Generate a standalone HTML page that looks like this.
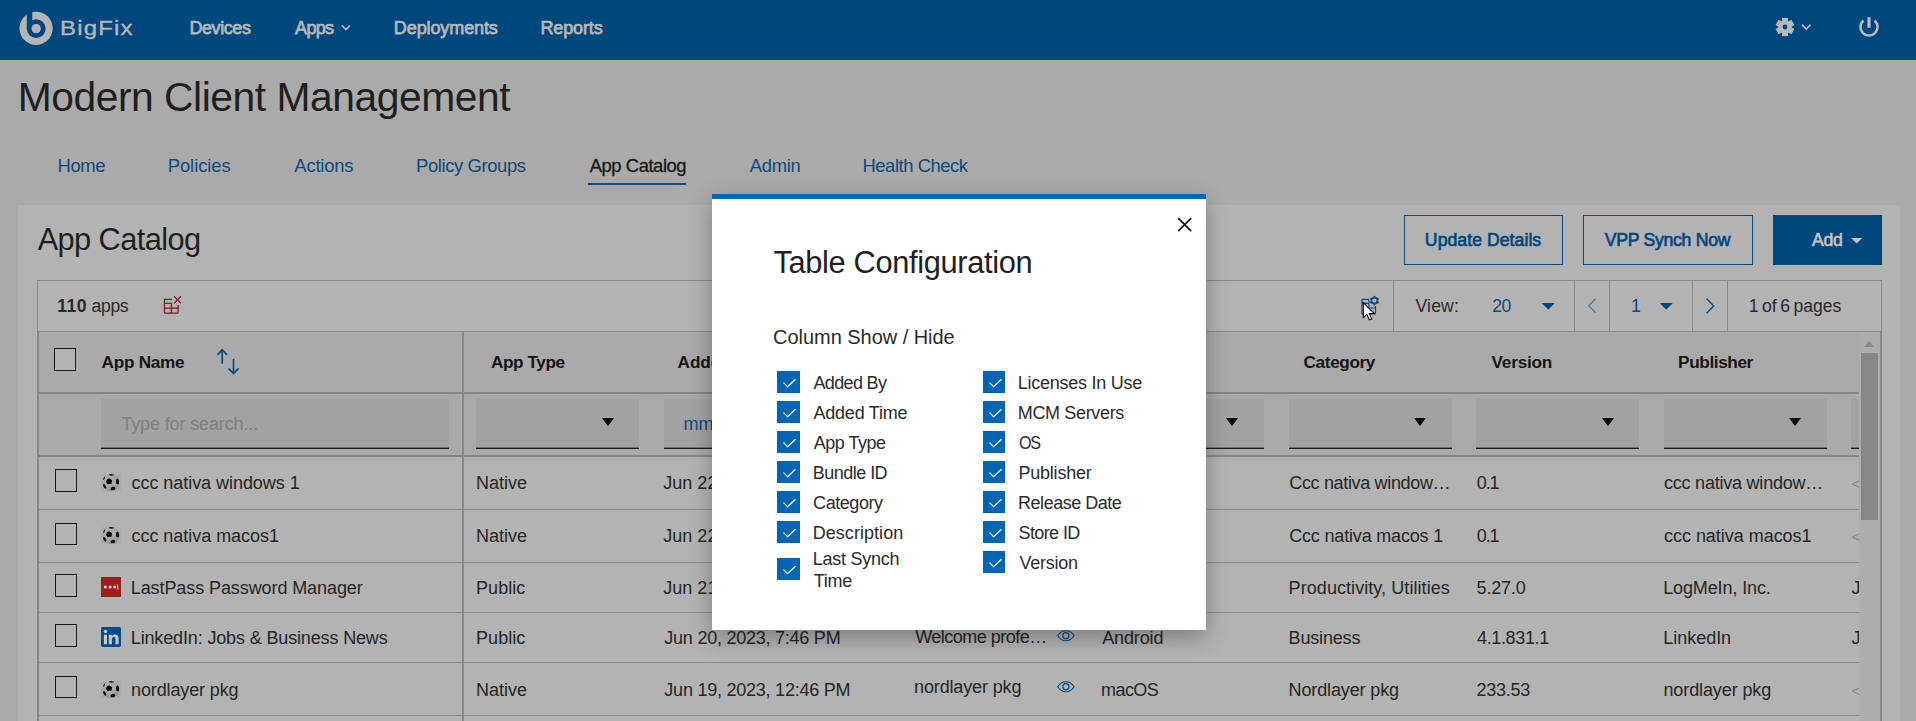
<!DOCTYPE html>
<html lang="en">
<head>
<meta charset="utf-8">
<title>Modern Client Management - App Catalog</title>
<style>
*{box-sizing:border-box;margin:0;padding:0}
html,body{width:1916px;height:721px;overflow:hidden}
body{background:#aaaaaa;font-family:"Liberation Sans",sans-serif;color:#1e1e1e;position:relative}
.t{position:absolute;white-space:nowrap;line-height:1}
.abs{position:absolute}
/* header */
#hdr{position:absolute;left:0;top:0;width:1916px;height:60px;background:#00477d}
.nav{font-size:18px;font-weight:normal;-webkit-text-stroke:.75px #b7b7b7;color:#b7b7b7;top:18.50px;letter-spacing:-.35px}
/* title */
#title{top:76.52px;font-size:40.8px;color:#1f1f1f}
.tab{font-size:18.4px;color:#0d4a7c;top:157.16px;letter-spacing:-.25px}
.tab.on{color:#181818}
/* panel */
#panel{position:absolute;left:18px;top:205px;width:1882px;height:516px;background:#b3b3b3}
#h2{top:225.12px;font-size:30.8px;color:#1f1f1f}
.btn{position:absolute;top:215px;height:50px;border:1px solid #0a4b80;color:#00477d;font-size:17.6px;font-weight:normal;-webkit-text-stroke:.65px}
.btn span{top:16.14px;letter-spacing:-.1px}

/* toolbar */
#tb{position:absolute;left:37px;top:280px;width:1845px;height:52px;border:1px solid #898989;background:#b3b3b3}
.vd{position:absolute;top:281px;width:1px;height:50px;background:#898989}
.tbt{font-size:17.6px;top:297.54px;color:#2a2a2a;letter-spacing:-.1px}
.blue{color:#0a4b80}
/* table */
#tbl{position:absolute;left:37px;top:331px;width:1845px;height:390px;border-left:2px solid #868686;border-right:2px solid #878787;border-top:1px solid #898989;background:#b3b3b3;overflow:hidden}
#thead{position:absolute;left:39px;top:332px;width:1820px;height:62px;background:#aaaaaa;border-bottom:2px solid #868686}
#tfilt{position:absolute;left:39px;top:394px;width:1820px;height:63px;background:#aaaaaa;border-bottom:2px solid #868686}
.th{font-size:17.2px;font-weight:bold;top:353.58px;color:#161616;letter-spacing:-.2px}
.cb{position:absolute;width:22.200px;height:22.600px;border:1px solid #161616;background:#b3b3b3}
.fi{position:absolute;top:399px;height:50px;background:#a2a2a2;border-bottom:1px solid #1c1c1c;box-shadow:0 -1px 0 rgba(28,28,28,.35) inset}
.car{position:absolute;top:418px;width:0;height:0;border-left:6px solid transparent;border-right:6px solid transparent;border-top:8px solid #0c0c0c}
.rl{position:absolute;left:39px;width:1820px;height:1px;background:#8a8a8a}
.td{font-size:18px;color:#262626;letter-spacing:-.05px}
#colsep{position:absolute;left:462px;top:332px;width:2px;height:389px;background:#878787}
/* scrollbar */
#sb{position:absolute;left:1859px;top:332px;width:21px;height:389px;background:#adadad}
#sbt{position:absolute;left:1861px;top:353px;width:17px;height:167px;background:#878787}

/* modal */
#modal{position:absolute;left:712px;top:194px;width:494px;height:436px;background:#fff;border-top:5px solid #0066b3;box-shadow:0 8px 22px rgba(0,0,0,.3)}
#mt{top:247.72px;font-size:30.8px;color:#212121}
#ms{top:326.70px;font-size:20px;color:#2b2b2b}
.ck{position:absolute;width:23px;height:22px;background:#0066b3}
.ck svg{position:absolute;left:0;top:0}
.lb{font-size:18px;color:#2b2b2b}
</style>
</head>
<body>
<svg width="0" height="0" style="position:absolute"><defs><radialGradient id="bg" cx=".42" cy=".38" r=".62"><stop offset="0" stop-color="#b1aeac"/><stop offset=".6" stop-color="#aaa7a5"/><stop offset=".9" stop-color="#9b9896"/><stop offset="1" stop-color="#8c8987"/></radialGradient><clipPath id="bc"><circle cx="9.800" cy="8.550" r="8.550"/></clipPath></defs></svg>
<!-- top navigation bar -->
<div id="hdr">
  <svg class="abs" style="left:19px;top:11px" width="34" height="35" viewBox="0 0 34 35">
    <circle cx="17.100" cy="17.300" r="16.600" fill="#b5b5b5"/>
    <rect x="7.750" y="-1" width="5.500" height="19" fill="#00477d"/>
    <circle cx="17.200" cy="17.600" r="9.450" fill="#00477d"/>
    <circle cx="17.150" cy="17.600" r="4.700" fill="#b5b5b5"/>
  </svg>
  <span class="t" id="brand" style="left:59.5px;top:18.30px;font-size:20px;color:#b5b5b5;letter-spacing:1px;transform:scaleX(1.195);transform-origin:0 0;-webkit-text-stroke:.4px #b5b5b5">BigFix</span>
  <span class="t nav" id="n1" style="left:189.38px;letter-spacing:-0.409px">Devices</span>
  <span class="t nav" id="n2" style="left:295.12px;letter-spacing:-0.686px">Apps</span>
  <svg class="abs" style="left:341px;top:23.6px" width="10" height="8" viewBox="0 0 10 8"><path d="M1 1.5 L5 5.5 L9 1.5" fill="none" stroke="#b9b9b9" stroke-width="1.7"/></svg>
  <span class="t nav" id="n3" style="left:393.84px;letter-spacing:-0.103px">Deployments</span>
  <span class="t nav" id="n4" style="left:540.46px;letter-spacing:-0.135px">Reports</span>
  <svg class="abs" style="left:1773px;top:15px" width="24" height="24" viewBox="-12 -12 24 24"><g fill="#b9b9b9"><circle r="6.700"/><rect x="-3.050" y="-9.100" width="6.100" height="5" transform="rotate(0)"/><rect x="-3.050" y="-9.100" width="6.100" height="5" transform="rotate(60)"/><rect x="-3.050" y="-9.100" width="6.100" height="5" transform="rotate(120)"/><rect x="-3.050" y="-9.100" width="6.100" height="5" transform="rotate(180)"/><rect x="-3.050" y="-9.100" width="6.100" height="5" transform="rotate(240)"/><rect x="-3.050" y="-9.100" width="6.100" height="5" transform="rotate(300)"/></g><circle r="2.400" fill="#00477d"/></svg>
  <svg class="abs" style="left:1800px;top:22px" width="13" height="10" viewBox="0 0 13 10"><path d="M2 2.600l4.300 4.500 4.300-4.500" fill="none" stroke="#b9b9b9" stroke-width="1.600"/></svg>
  <svg class="abs" style="left:1857px;top:15px" width="24" height="24" viewBox="-12 -12 24 24" fill="none" stroke="#b9b9b9"><path d="M-5.50 -6.55A8.55 8.55 0 1 0 5.50 -6.55" stroke-width="2.500"/><path d="M0 -9.800V.8" stroke-width="3.200"/></svg>
</div>

<span class="t" id="title" style="left:17.69px;letter-spacing:-0.462px">Modern Client Management</span>

<!-- tabs -->
<span class="t tab" id="t1" style="left:57.51px;letter-spacing:-0.331px">Home</span>
<span class="t tab" id="t2" style="left:167.74px;letter-spacing:-0.061px">Policies</span>
<span class="t tab" id="t3" style="left:294.35px;letter-spacing:-0.188px">Actions</span>
<span class="t tab" id="t4" style="left:416.11px;letter-spacing:-0.382px">Policy Groups</span>
<span class="t tab on" id="t5" style="left:589.73px;letter-spacing:-0.436px;-webkit-text-stroke:.3px #181818">App Catalog</span>
<div class="abs" style="left:588px;top:183px;width:98px;height:2px;background:#004a80"></div>
<span class="t tab" id="t6" style="left:749.83px;letter-spacing:-0.331px">Admin</span>
<span class="t tab" id="t7" style="left:862.50px;letter-spacing:-0.448px">Health Check</span>

<div id="panel"></div>
<span class="t" id="h2" style="left:37.64px;letter-spacing:-0.598px">App Catalog</span>

<div class="btn" style="left:1404px;width:159px"><span class="t" id="b1" style="left:19.86px;letter-spacing:0.070px">Update Details</span></div>
<div class="btn" style="left:1583px;width:170px"><span class="t" id="b2" style="left:20.67px;letter-spacing:-0.241px">VPP Synch Now</span></div>
<div class="btn" style="left:1773px;width:109px;background:#00477d;color:#c4c4c4;border-color:#00477d"><span class="t" id="b3" style="left:37.89px;letter-spacing:-0.162px">Add</span>
  <svg class="abs" style="left:77.300px;top:21.600px" width="12" height="7" viewBox="0 0 12 7"><path d="M0 0h11.400L5.700 5.600z" fill="#c4c4c4"/></svg>
</div>


<!-- toolbar -->
<div id="tb"></div>
<span class="t tbt" id="cnt" style="left:57.36px;letter-spacing:-0.380px"><b style="letter-spacing:.45px">110</b> apps</span>
<svg class="abs" style="left:155px;top:290px" width="35" height="30" viewBox="0 0 35 30" fill="none" stroke="#8e1521" stroke-width="1.250">
  <path d="M17.100 9.400H9.400V22.200q0 .8 .8 .8H22.300q.8 0 .8-.8V15M9.400 13.400H16.900M9.400 18.100H23.100M16.400 13.400V23"/><path d="M19 6.300l7 7.100M26 6.300l-7 7.100" stroke-width="1.250"/></svg>
<svg class="abs" style="left:1350px;top:285px" width="40" height="40" viewBox="0 0 40 40" fill="none" stroke="#0a4b80" stroke-width="1.150">
  <path d="M18.900 14.400H12V28.200q0 .8 .8 .8H24.700q.8 0 .8-.8V21M12 18.300H18.900M18.900 14.400V23M18.900 23H25.500"/><path d="M24.40 10.90 L26.05 12.74 L28.47 13.25 L27.70 15.60 L28.47 17.95 L26.05 18.46 L24.40 20.30 L22.75 18.46 L20.33 17.95 L21.10 15.60 L20.33 13.25 L22.75 12.74z" fill="#0a4b80" stroke-width=".8"/><circle cx="24.400" cy="15.600" r="2.100" fill="#b3b3b3" stroke="none"/>
  <path d="M13.30 17.60 L13.30 32.60 L16.90 29.40 L19.40 34.90 L21.70 33.90 L19.30 28.60 L24.10 28.50z" fill="#fff" stroke="#000" stroke-width="1.050" stroke-linejoin="miter"/></svg>
<div class="vd" style="left:1393px"></div><div class="vd" style="left:1574px"></div><div class="vd" style="left:1609px"></div><div class="vd" style="left:1692px"></div><div class="vd" style="left:1727px"></div>
<span class="t tbt" id="vw" style="left:1415.45px;letter-spacing:0.189px">View:</span>
<span class="t tbt blue" id="v20" style="left:1492.32px;letter-spacing:-0.480px">20</span>
<svg class="abs" style="left:1541.800px;top:302.800px" width="13" height="7" viewBox="0 0 13 7"><path d="M.6 0h11.400q.8 0 .2 .7L6.700 6.300q-.4 .4-.8 0L.4 .7q-.6-.7 .2-.7z" fill="#00477d"/></svg>
<svg class="abs" style="left:1587px;top:297px" width="11" height="18" viewBox="0 0 11 18"><path d="M8.700 1.700L1.700 8.700l7 7" fill="none" stroke="#4d7ca6" stroke-width="1.300"/></svg>
<span class="t tbt blue" id="pg1" style="left:1631px">1</span>
<svg class="abs" style="left:1659.700px;top:302.800px" width="13" height="7" viewBox="0 0 13 7"><path d="M.6 0h11.400q.8 0 .2 .7L6.700 6.300q-.4 .4-.8 0L.4 .7q-.6-.7 .2-.7z" fill="#00477d"/></svg>
<svg class="abs" style="left:1705px;top:296.500px" width="11" height="18" viewBox="0 0 11 18"><path d="M1.500 1.600L8.700 8.900l-7.200 7.300" fill="none" stroke="#0a4b80" stroke-width="1.400"/></svg>
<span class="t tbt" id="pgs" style="left:1748.72px;word-spacing:-1.300px;letter-spacing:-0.040px">1 of 6 pages</span>

<!-- table -->
<div id="tbl"></div>
<div id="thead"></div>
<div id="tfilt"></div>
<div class="cb" style="left:53.900px;top:347.900px;height:23.100px"></div>
<span class="t th" id="h_name" style="left:101.53px;letter-spacing:-0.262px">App Name</span>
<svg class="abs" style="left:214px;top:345.200px" width="28" height="32" viewBox="0 0 28 32" fill="none" stroke="#0a4b80" stroke-width="1.700">
  <path d="M8.200 18.800V4.600M3.500 9.800L8.200 4.700l4.800 5.100"/><path d="M19.500 14V28.200M14.500 23.300l5 5.200 5.100-5.200"/></svg>
<span class="t th" id="h_type" style="left:490.94px;letter-spacing:-0.408px">App Type</span>
<span class="t th" id="h_added" style="left:677.6px;letter-spacing:-.1px">Added Time</span>
<span class="t th" id="h_desc" style="left:928px">Description</span>
<span class="t th" id="h_os" style="left:1116px">OS</span>
<span class="t th" id="h_cat" style="left:1303.59px;letter-spacing:-0.379px">Category</span>
<span class="t th" id="h_ver" style="left:1491.56px;letter-spacing:-0.222px">Version</span>
<span class="t th" id="h_pub" style="left:1678.12px;letter-spacing:-0.396px">Publisher</span>

<div class="fi" style="left:101px;width:348px"></div>
<span class="t" id="ph" style="left:121.39px;top:414.70px;font-size:18px;color:#808080;letter-spacing:-0.131px">Type for search...</span>
<div class="fi" style="left:476px;width:162.500px"></div><div class="car" style="left:601.500px"></div>
<div class="fi" style="left:664px;width:162.500px"></div>
<span class="t blue" id="mm" style="left:683.5px;top:414.70px;font-size:18px">mm/dd/yyyy</span>
<div class="fi" style="left:914px;width:162.500px"></div>
<div class="fi" style="left:1101px;width:162.500px"></div><div class="car" style="left:1226px"></div>
<div class="fi" style="left:1289px;width:162.500px"></div><div class="car" style="left:1414px"></div>
<div class="fi" style="left:1476px;width:162.500px"></div><div class="car" style="left:1601.500px"></div>
<div class="fi" style="left:1664px;width:162.500px"></div><div class="car" style="left:1789px"></div>
<div class="fi" style="left:1851px;width:8px"></div>
<div class="rl" style="top:509px"></div>
<div class="cb" style="left:55px;top:469.1px"></div>
<svg class="abs" style="left:101px;top:473.6px" width="20" height="18" viewBox="0 0 20 18"><rect width="20" height="17.200" fill="#adadad"/><circle cx="9.800" cy="8.550" r="8.550" fill="url(#bg)"/><g fill="#0a0a0a" clip-path="url(#bc)"><path d="M8 4.300l3.100 1.900-.75 3.600-3.500 .55-1.950-2.900z"/><circle cx="8" cy="7.400" r="2.550"/><ellipse cx="16.600" cy="7.400" rx="1.650" ry="2.800"/><ellipse cx="10.600" cy=".6" rx="2.700" ry="1.100"/><ellipse cx="2.950" cy="3.800" rx=".95" ry="1.900" transform="rotate(25 2.950 3.800)"/><ellipse cx="3.550" cy="12.400" rx="1.400" ry="2.500" transform="rotate(-32 3.550 12.400)"/><ellipse cx="11.900" cy="14.500" rx="2.400" ry="1.700" transform="rotate(-15 11.900 14.500)"/></g></svg>
<span class="t td" id="r0c0" style="left:131.49px;top:473.50px;letter-spacing:-0.046px">ccc nativa windows 1</span>
<span class="t td" id="r0c1" style="left:476.06px;top:473.50px;letter-spacing:-0.033px">Native</span>
<span class="t td" id="r0c2" style="left:663.2px;top:473.50px;letter-spacing:.04px">Jun 22, 2023, 8:10 PM</span>
<span class="t td" id="r0c3" style="left:914px;top:472.20px;letter-spacing:.1px">ccc nativa win…</span>
<span class="t td" id="r0c4" style="left:1101px;top:473.50px;letter-spacing:.1px">Windows</span>
<span class="t td" id="r0c5" style="left:1289.23px;top:473.50px;letter-spacing:-0.335px">Ccc nativa window…</span>
<span class="t td" id="r0c6" style="left:1476.75px;top:473.50px;letter-spacing:-1.095px">0.1</span>
<span class="t td" id="r0c7" style="left:1664.02px;top:473.50px;letter-spacing:-0.223px">ccc nativa window…</span>
<span class="t td" id="r0c8" style="left:1851.5px;top:473.50px;color:#8a8a8a;font-size:15px;margin-top:2px">&lt;</span>
<svg class="abs" style="left:1057.100px;top:475.2px" width="18" height="12" viewBox="0 0 18 12" fill="none" stroke="#0a4b80" stroke-width="1.150"><path d="M.7 5.700C3 2.100 6 .7 8.900 .7S14.800 2.100 17.100 5.700C14.800 9.300 11.800 10.700 8.900 10.700S3 9.300 .7 5.700z"/><circle cx="8.900" cy="5.700" r="3.050"/></svg>
<div class="rl" style="top:562px"></div>
<div class="cb" style="left:55px;top:522.5px"></div>
<svg class="abs" style="left:101px;top:527.0px" width="20" height="18" viewBox="0 0 20 18"><rect width="20" height="17.200" fill="#adadad"/><circle cx="9.800" cy="8.550" r="8.550" fill="url(#bg)"/><g fill="#0a0a0a" clip-path="url(#bc)"><path d="M8 4.300l3.100 1.900-.75 3.600-3.500 .55-1.950-2.900z"/><circle cx="8" cy="7.400" r="2.550"/><ellipse cx="16.600" cy="7.400" rx="1.650" ry="2.800"/><ellipse cx="10.600" cy=".6" rx="2.700" ry="1.100"/><ellipse cx="2.950" cy="3.800" rx=".95" ry="1.900" transform="rotate(25 2.950 3.800)"/><ellipse cx="3.550" cy="12.400" rx="1.400" ry="2.500" transform="rotate(-32 3.550 12.400)"/><ellipse cx="11.900" cy="14.500" rx="2.400" ry="1.700" transform="rotate(-15 11.900 14.500)"/></g></svg>
<span class="t td" id="r1c0" style="left:131.49px;top:527.20px;letter-spacing:-0.033px">ccc nativa macos1</span>
<span class="t td" id="r1c1" style="left:476.06px;top:527.20px;letter-spacing:-0.033px">Native</span>
<span class="t td" id="r1c2" style="left:663.2px;top:527.20px;letter-spacing:.04px">Jun 22, 2023, 7:55 PM</span>
<span class="t td" id="r1c3" style="left:914px;top:525.90px;letter-spacing:.1px">ccc nativa mac…</span>
<span class="t td" id="r1c4" style="left:1101px;top:527.20px;letter-spacing:.1px">macOS</span>
<span class="t td" id="r1c5" style="left:1289.23px;top:527.20px;letter-spacing:-0.177px">Ccc nativa macos 1</span>
<span class="t td" id="r1c6" style="left:1476.75px;top:527.20px;letter-spacing:-1.095px">0.1</span>
<span class="t td" id="r1c7" style="left:1664.02px;top:527.20px;letter-spacing:-0.033px">ccc nativa macos1</span>
<span class="t td" id="r1c8" style="left:1851.5px;top:527.20px;color:#8a8a8a;font-size:15px;margin-top:2px">&lt;</span>
<svg class="abs" style="left:1057.100px;top:528.0px" width="18" height="12" viewBox="0 0 18 12" fill="none" stroke="#0a4b80" stroke-width="1.150"><path d="M.7 5.700C3 2.100 6 .7 8.900 .7S14.800 2.100 17.100 5.700C14.800 9.300 11.800 10.700 8.900 10.700S3 9.300 .7 5.700z"/><circle cx="8.900" cy="5.700" r="3.050"/></svg>
<div class="rl" style="top:612px"></div>
<div class="cb" style="left:55px;top:574.0px"></div>
<svg class="abs" style="left:101px;top:577.0px" width="20" height="20" viewBox="0 0 20 20"><rect width="20" height="20" fill="#9b1f1c"/><g fill="#e0cbca"><circle cx="4.400" cy="10" r="1.550"/><circle cx="9.200" cy="10" r="1.550"/><circle cx="13.700" cy="10" r="1.550"/><rect x="16.300" y="7.200" width=".9" height="5.600"/></g></svg>
<span class="t td" id="r2c0" style="left:130.79px;top:578.70px;letter-spacing:-0.091px">LastPass Password Manager</span>
<span class="t td" id="r2c1" style="left:476.06px;top:578.70px;letter-spacing:0.048px">Public</span>
<span class="t td" id="r2c2" style="left:663.2px;top:578.70px;letter-spacing:.04px">Jun 21, 2023, 9:02 PM</span>
<span class="t td" id="r2c3" style="left:914px;top:577.40px;letter-spacing:.1px">LastPass puts …</span>
<span class="t td" id="r2c4" style="left:1101px;top:578.70px;letter-spacing:.1px">iOS</span>
<span class="t td" id="r2c5" style="left:1288.58px;top:578.70px;letter-spacing:0.069px">Productivity, Utilities</span>
<span class="t td" id="r2c6" style="left:1476.58px;top:578.70px;letter-spacing:-0.196px">5.27.0</span>
<span class="t td" id="r2c7" style="left:1663.23px;top:578.70px;letter-spacing:-0.127px">LogMeIn, Inc.</span>
<span class="t td" id="r2c8" style="left:1851.5px;top:578.70px">J</span>
<svg class="abs" style="left:1057.100px;top:580.4px" width="18" height="12" viewBox="0 0 18 12" fill="none" stroke="#0a4b80" stroke-width="1.150"><path d="M.7 5.700C3 2.100 6 .7 8.900 .7S14.800 2.100 17.100 5.700C14.800 9.300 11.800 10.700 8.900 10.700S3 9.300 .7 5.700z"/><circle cx="8.900" cy="5.700" r="3.050"/></svg>
<div class="rl" style="top:662px"></div>
<div class="cb" style="left:55px;top:624.0px"></div>
<svg class="abs" style="left:101px;top:626.9px" width="20" height="20" viewBox="0 0 20 20"><rect width="20" height="20" rx="1.800" fill="#0a4a8b"/><g fill="#c9c6c3"><rect x="2.900" y="7.700" width="3.100" height="9.500"/><circle cx="4.450" cy="4.500" r="1.750"/><path d="M7.800 7.700h3v1.300c.6-1 1.600-1.600 3.100-1.600 2.900 0 3.700 1.700 3.700 4.400v5.400h-3.100v-4.900c0-1.200-.1-2.400-1.600-2.400s-2 1.100-2 2.400v4.900H7.800z"/></g></svg>
<span class="t td" id="r3c0" style="left:130.79px;top:628.50px;letter-spacing:-0.145px">LinkedIn: Jobs &amp; Business News</span>
<span class="t td" id="r3c1" style="left:476.06px;top:628.50px;letter-spacing:0.048px">Public</span>
<span class="t td" id="r3c2" style="left:664.33px;top:628.50px;letter-spacing:-0.241px">Jun 20, 2023, 7:46 PM</span>
<span class="t td" id="r3c3" style="left:915.23px;top:627.70px;letter-spacing:-0.519px">Welcome profe…</span>
<span class="t td" id="r3c4" style="left:1102.19px;top:628.50px;letter-spacing:-0.125px">Android</span>
<span class="t td" id="r3c5" style="left:1288.58px;top:628.50px;letter-spacing:-0.169px">Business</span>
<span class="t td" id="r3c6" style="left:1477.00px;top:628.50px;letter-spacing:-0.353px">4.1.831.1</span>
<span class="t td" id="r3c7" style="left:1663.23px;top:628.50px;letter-spacing:-0.020px">LinkedIn</span>
<span class="t td" id="r3c8" style="left:1851.5px;top:628.50px">J</span>
<svg class="abs" style="left:1057.100px;top:630.2px" width="18" height="12" viewBox="0 0 18 12" fill="none" stroke="#0a4b80" stroke-width="1.150"><path d="M.7 5.700C3 2.100 6 .7 8.900 .7S14.800 2.100 17.100 5.700C14.800 9.300 11.800 10.700 8.900 10.700S3 9.300 .7 5.700z"/><circle cx="8.900" cy="5.700" r="3.050"/></svg>
<div class="rl" style="top:715px"></div>
<div class="cb" style="left:55px;top:675.6px"></div>
<svg class="abs" style="left:101px;top:680.6px" width="20" height="18" viewBox="0 0 20 18"><rect width="20" height="17.200" fill="#adadad"/><circle cx="9.800" cy="8.550" r="8.550" fill="url(#bg)"/><g fill="#0a0a0a" clip-path="url(#bc)"><path d="M8 4.300l3.100 1.900-.75 3.600-3.500 .55-1.950-2.900z"/><circle cx="8" cy="7.400" r="2.550"/><ellipse cx="16.600" cy="7.400" rx="1.650" ry="2.800"/><ellipse cx="10.600" cy=".6" rx="2.700" ry="1.100"/><ellipse cx="2.950" cy="3.800" rx=".95" ry="1.900" transform="rotate(25 2.950 3.800)"/><ellipse cx="3.550" cy="12.400" rx="1.400" ry="2.500" transform="rotate(-32 3.550 12.400)"/><ellipse cx="11.900" cy="14.500" rx="2.400" ry="1.700" transform="rotate(-15 11.900 14.500)"/></g></svg>
<span class="t td" id="r4c0" style="left:131.06px;top:680.50px;letter-spacing:-0.129px">nordlayer pkg</span>
<span class="t td" id="r4c1" style="left:476.06px;top:680.50px;letter-spacing:-0.033px">Native</span>
<span class="t td" id="r4c2" style="left:664.37px;top:680.50px;letter-spacing:-0.238px">Jun 19, 2023, 12:46 PM</span>
<span class="t td" id="r4c3" style="left:914.06px;top:678.20px;letter-spacing:-0.143px">nordlayer pkg</span>
<span class="t td" id="r4c4" style="left:1101.06px;top:680.50px;letter-spacing:-0.580px">macOS</span>
<span class="t td" id="r4c5" style="left:1288.58px;top:680.50px;letter-spacing:-0.128px">Nordlayer pkg</span>
<span class="t td" id="r4c6" style="left:1476.58px;top:680.50px;letter-spacing:-0.254px">233.53</span>
<span class="t td" id="r4c7" style="left:1663.48px;top:680.50px;letter-spacing:-0.109px">nordlayer pkg</span>
<span class="t td" id="r4c8" style="left:1851.5px;top:680.50px;color:#8a8a8a;font-size:15px;margin-top:2px">&lt;</span>
<svg class="abs" style="left:1057.100px;top:680.8px" width="18" height="12" viewBox="0 0 18 12" fill="none" stroke="#0a4b80" stroke-width="1.150"><path d="M.7 5.700C3 2.100 6 .7 8.900 .7S14.800 2.100 17.100 5.700C14.800 9.300 11.800 10.700 8.900 10.700S3 9.300 .7 5.700z"/><circle cx="8.900" cy="5.700" r="3.050"/></svg>
<div id="colsep"></div>
<div id="sb"></div><div id="sbt"></div>
<svg class="abs" style="left:1864px;top:341px" width="10" height="6" viewBox="0 0 10 6"><path d="M0 6h10L5 0z" fill="#8a8a8a"/></svg>

<!-- modal: table configuration -->
<div id="mwrap">
<div id="modal"></div>
<svg class="abs" style="left:1176px;top:216px" width="18" height="18" viewBox="0 0 18 18"><path d="M2.700 2.600l12 12M14.700 2.600l-12 12" fill="none" stroke="#1a1a1a" stroke-width="1.750" stroke-linecap="round"/></svg>
<span class="t" id="mt" style="left:773.40px;letter-spacing:-0.337px">Table Configuration</span>
<span class="t" id="ms" style="left:773.04px;letter-spacing:-0.036px">Column Show / Hide</span>
<div class="ck" style="left:777px;top:371px;width:23px"><svg width="23" height="22" viewBox="0 0 23 22"><path d="M6.500 11.600l4.100 4L18.500 8.200" fill="none" stroke="#fff" stroke-width="1.200"/></svg></div>
<span class="t lb" id="a0" style="left:813.53px;top:373.60px;letter-spacing:-0.665px">Added By</span>
<div class="ck" style="left:777px;top:401px;width:23px"><svg width="23" height="22" viewBox="0 0 23 22"><path d="M6.500 11.600l4.100 4L18.500 8.200" fill="none" stroke="#fff" stroke-width="1.200"/></svg></div>
<span class="t lb" id="a1" style="left:813.53px;top:403.60px;letter-spacing:-0.229px">Added Time</span>
<div class="ck" style="left:777px;top:431px;width:23px"><svg width="23" height="22" viewBox="0 0 23 22"><path d="M6.500 11.600l4.100 4L18.500 8.200" fill="none" stroke="#fff" stroke-width="1.200"/></svg></div>
<span class="t lb" id="a2" style="left:813.87px;top:433.60px;letter-spacing:-0.516px">App Type</span>
<div class="ck" style="left:777px;top:461px;width:23px"><svg width="23" height="22" viewBox="0 0 23 22"><path d="M6.500 11.600l4.100 4L18.500 8.200" fill="none" stroke="#fff" stroke-width="1.200"/></svg></div>
<span class="t lb" id="a3" style="left:812.65px;top:463.60px;letter-spacing:-0.509px">Bundle ID</span>
<div class="ck" style="left:777px;top:491px;width:23px"><svg width="23" height="22" viewBox="0 0 23 22"><path d="M6.500 11.600l4.100 4L18.500 8.200" fill="none" stroke="#fff" stroke-width="1.200"/></svg></div>
<span class="t lb" id="a4" style="left:813.11px;top:493.60px;letter-spacing:-0.444px">Category</span>
<div class="ck" style="left:777px;top:521px;width:23px"><svg width="23" height="22" viewBox="0 0 23 22"><path d="M6.500 11.600l4.100 4L18.500 8.200" fill="none" stroke="#fff" stroke-width="1.200"/></svg></div>
<span class="t lb" id="a5" style="left:812.65px;top:523.60px;letter-spacing:0.057px">Description</span>
<div class="ck" style="left:777px;top:558px;width:23px"><svg width="23" height="22" viewBox="0 0 23 22"><path d="M6.500 11.600l4.100 4L18.500 8.200" fill="none" stroke="#fff" stroke-width="1.200"/></svg></div>
<span class="t lb" id="a6" style="left:812.65px;top:550.30px;letter-spacing:-0.249px">Last Synch</span>
<span class="t lb" id="a7" style="left:813.66px;top:571.90px;letter-spacing:-0.246px">Time</span>
<div class="ck" style="left:982.7px;top:371px;width:22.3px"><svg width="23" height="22" viewBox="0 0 23 22"><path d="M6.500 11.600l4.100 4L18.500 8.200" fill="none" stroke="#fff" stroke-width="1.200"/></svg></div>
<span class="t lb" id="c0" style="left:1017.76px;top:373.60px;letter-spacing:-0.252px">Licenses In Use</span>
<div class="ck" style="left:982.7px;top:401px;width:22.3px"><svg width="23" height="22" viewBox="0 0 23 22"><path d="M6.500 11.600l4.100 4L18.500 8.200" fill="none" stroke="#fff" stroke-width="1.200"/></svg></div>
<span class="t lb" id="c1" style="left:1017.76px;top:403.60px;letter-spacing:-0.345px">MCM Servers</span>
<div class="ck" style="left:982.7px;top:431px;width:22.3px"><svg width="23" height="22" viewBox="0 0 23 22"><path d="M6.500 11.600l4.100 4L18.500 8.200" fill="none" stroke="#fff" stroke-width="1.200"/></svg></div>
<span class="t lb" id="c2" style="left:1018.81px;top:433.60px;letter-spacing:-1.571px;transform:scaleX(.9);transform-origin:0 0">OS</span>
<div class="ck" style="left:982.7px;top:461px;width:22.3px"><svg width="23" height="22" viewBox="0 0 23 22"><path d="M6.500 11.600l4.100 4L18.500 8.200" fill="none" stroke="#fff" stroke-width="1.200"/></svg></div>
<span class="t lb" id="c3" style="left:1018.41px;top:463.60px;letter-spacing:-0.206px">Publisher</span>
<div class="ck" style="left:982.7px;top:491px;width:22.3px"><svg width="23" height="22" viewBox="0 0 23 22"><path d="M6.500 11.600l4.100 4L18.500 8.200" fill="none" stroke="#fff" stroke-width="1.200"/></svg></div>
<span class="t lb" id="c4" style="left:1018.09px;top:493.60px;letter-spacing:-0.483px">Release Date</span>
<div class="ck" style="left:982.7px;top:521px;width:22.3px"><svg width="23" height="22" viewBox="0 0 23 22"><path d="M6.500 11.600l4.100 4L18.500 8.200" fill="none" stroke="#fff" stroke-width="1.200"/></svg></div>
<span class="t lb" id="c5" style="left:1018.54px;top:523.60px;letter-spacing:-0.612px">Store ID</span>
<div class="ck" style="left:982.7px;top:551px;width:22.3px"><svg width="23" height="22" viewBox="0 0 23 22"><path d="M6.500 11.600l4.100 4L18.500 8.200" fill="none" stroke="#fff" stroke-width="1.200"/></svg></div>
<span class="t lb" id="c6" style="left:1019.39px;top:553.60px;letter-spacing:-0.224px">Version</span>
</div>
</body>
</html>
